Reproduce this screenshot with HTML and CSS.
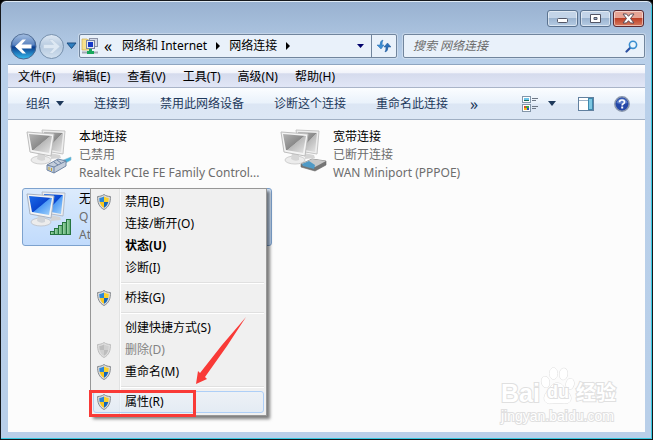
FILE: index.html
```html
<!DOCTYPE html>
<html lang="zh-CN">
<head>
    <meta charset="UTF-8">
    <meta name="viewport" content="width=device-width, initial-scale=1.0">
    <title>网络连接</title>
    <link rel="stylesheet" href="styles.css">
</head>
<body>
    <!-- Shared icons -->
    <svg class="defs" width="0" height="0" aria-hidden="true">
        <defs>
            <linearGradient id="grayScreen" x1="0" y1="0" x2="1" y2="1">
                <stop offset="0" stop-color="#b4b4b4"/>
                <stop offset=".5" stop-color="#8a8a8a"/>
                <stop offset=".52" stop-color="#b9b9b9"/>
                <stop offset="1" stop-color="#e6e6e6"/>
            </linearGradient>
            <linearGradient id="blueScreen" x1="0" y1="0" x2="1" y2="1">
                <stop offset="0" stop-color="#1c6be8"/>
                <stop offset=".5" stop-color="#0a46cf"/>
                <stop offset=".53" stop-color="#4f9bf5"/>
                <stop offset="1" stop-color="#a5d4fb"/>
            </linearGradient>
            <linearGradient id="backBlue" x1="0" y1="0" x2="0" y2="1">
                <stop offset="0" stop-color="#8fb0dc"/>
                <stop offset=".48" stop-color="#2f62ad"/>
                <stop offset=".52" stop-color="#0b3c8c"/>
                <stop offset="1" stop-color="#35bdf0"/>
            </linearGradient>
            <linearGradient id="forwardGray" x1="0" y1="0" x2="0" y2="1">
                <stop offset="0" stop-color="#dfe9f4"/>
                <stop offset=".5" stop-color="#b5c9df"/>
                <stop offset="1" stop-color="#d3e1ef"/>
            </linearGradient>
            <linearGradient id="barGreen" x1="0" y1="0" x2="1" y2="0">
                <stop offset="0" stop-color="#a9dcb4"/>
                <stop offset="1" stop-color="#4fa565"/>
            </linearGradient>
        </defs>
        <symbol id="shield" viewBox="0 0 14 16">
            <path d="M7 .5C5 2 3 2.400 .6 2.500C.4 8.500 2 13 7 15.500C12 13 13.600 8.500 13.400 2.500C11 2.400 9 2 7 .5Z" fill="#dcdcdc" stroke="#85898d"/>
            <path d="M7 2.500C5.500 3.400 4 3.800 2.300 4C2.300 5.600 2.400 6.800 2.700 8H7Z" fill="#2c86d6"/>
            <path d="M7 2.500C8.500 3.400 10 3.800 11.700 4C11.700 5.600 11.600 6.800 11.300 8H7Z" fill="#fbd22d"/>
            <path d="M7 8H2.700C3.400 10.600 4.700 12.500 7 13.800Z" fill="#fbc91c"/>
            <path d="M7 8H11.300C10.600 10.600 9.300 12.500 7 13.800Z" fill="#1767b8"/>
        </symbol>
        <symbol id="shieldOff" viewBox="0 0 14 16">
            <path d="M7 .5C5 2 3 2.400 .6 2.500C.4 8.500 2 13 7 15.500C12 13 13.600 8.500 13.400 2.500C11 2.400 9 2 7 .5Z" fill="#dedede" stroke="#bcbcbc"/>
            <path d="M7 2.500C5.500 3.400 4 3.800 2.300 4C2.300 5.600 2.400 6.800 2.700 8H7ZM7 8H11.300C10.600 10.600 9.300 12.500 7 13.800Z" fill="#bdbdbd"/>
            <path d="M7 2.500C8.500 3.400 10 3.800 11.700 4C11.700 5.600 11.600 6.800 11.300 8H7ZM7 8H2.700C3.400 10.600 4.700 12.500 7 13.800Z" fill="#cfcfcf"/>
        </symbol>
        <symbol id="pcGray" viewBox="0 0 48 48">
            <path d="M25 25l10 2l1 3l-10 1z" fill="#d4d4d4"/>
            <path d="M17 2L40 3L38 26L20 23Z" fill="#eee" stroke="#c4c4c4"/>
            <path d="M19 4L38 5L36 24L21 21Z" fill="url(#grayScreen)"/>
            <ellipse cx="16" cy="32" rx="10" ry="4" fill="#ececec" stroke="#cfcfcf"/>
            <path d="M13 25L20 26L20 32Q16 34 12 31Z" fill="#d6d6d6"/>
            <path d="M2 4L29 6L26 28L5 24Z" fill="#f4f4f4" stroke="#bdbdbd"/>
            <path d="M4 6L27 8L24 25L7 22Z" fill="url(#grayScreen)"/>
        </symbol>
        <symbol id="pcBlue" viewBox="0 0 48 48">
            <path d="M25 25l10 2l1 3l-10 1z" fill="#d4d4d4"/>
            <path d="M17 2L40 3L38 26L20 23Z" fill="#eee" stroke="#b3bccb"/>
            <path d="M19 4L38 5L36 24L21 21Z" fill="url(#blueScreen)"/>
            <ellipse cx="16" cy="32" rx="10" ry="4" fill="#ececec" stroke="#c3c8d0"/>
            <path d="M13 25L20 26L20 32Q16 34 12 31Z" fill="#cfd3d8"/>
            <path d="M2 4L29 6L26 28L5 24Z" fill="#f4f4f4" stroke="#a9b3c2"/>
            <path d="M4 6L27 8L24 25L7 22Z" fill="url(#blueScreen)"/>
        </symbol>
    </svg>

    <div class="window">
        <!-- Title bar -->
        <div class="titlebar">
            <button type="button" class="control" aria-label="最小化">
                <svg width="13" height="11" viewBox="0 0 13 11"><rect x="1.500" y="5.500" width="10" height="4" rx="1" fill="#fff" stroke="#535666"/></svg>
            </button>
            <button type="button" class="control" aria-label="最大化">
                <svg width="13" height="11" viewBox="0 0 13 11"><path d="M1.500 1.500H11.500V9.500H1.500ZM5 4.500V6.500H8V4.500Z" fill="#fff" fill-rule="evenodd" stroke="#535666"/></svg>
            </button>
            <button type="button" class="control close" aria-label="关闭">
                <svg width="13" height="11" viewBox="0 0 13 11"><path d="M1 1H4.500L6.500 3.300L8.500 1H12L8.500 5.500L12 10H8.500L6.500 7.700L4.500 10H1L4.500 5.500Z" fill="#fff" stroke="#5b4a55"/></svg>
            </button>
        </div>

        <!-- Navigation and address -->
        <div class="navbar">
            <div class="travel">
                <button type="button" aria-label="后退">
                    <svg width="27" height="27" viewBox="0 0 27 27"><circle cx="13.500" cy="13.500" r="12.500" fill="url(#backBlue)" stroke="#47658f"/><path d="M2.500 12A11 11 0 0 1 24.500 12Q13 16 2.500 12Z" fill="#fff" opacity=".18"/><path d="M5 13.500L12.500 6.500H16L11.500 11.500H21.500V15.500H11.500L16 20.500H12.500Z" fill="#fff"/></svg>
                </button>
                <button type="button" aria-label="前进">
                    <svg width="27" height="27" viewBox="0 0 27 27"><circle cx="13.500" cy="13.500" r="12" fill="url(#forwardGray)" stroke="#7690ad"/><path d="M22 13.500L14.500 6.500H11L15.500 11.500H5.500V15.500H15.500L11 20.500H14.500Z" fill="#dde8f3" stroke="#b9cbdd" stroke-width=".5"/></svg>
                </button>
                <button type="button" aria-label="最近页面">
                    <svg width="11" height="8" viewBox="0 0 11 8"><path d="M1 1H10L5.500 6.500Z" fill="#2f7fc0" stroke="#1c4d80"/></svg>
                </button>
            </div>
            <div class="address">
                <svg width="18" height="18" viewBox="0 0 18 18">
                    <path d="M1 2H6L7 3H10V13H1Z" fill="#f6e08c" stroke="#cfae50" stroke-width=".7"/>
                    <rect x="8.500" y="1.500" width="8" height="8" fill="#d4dae8" stroke="#8b93a8"/>
                    <rect x="5.500" y="3.500" width="8" height="8" fill="#e6e9f0" stroke="#7b86a0"/>
                    <rect x="7" y="5" width="5" height="5" fill="#1538c8"/>
                    <path d="M9 12V15M1 15.500H17" stroke="#a4aab5" stroke-width="2"/>
                    <path d="M8 12H11V14H13V17H6V14H8Z" fill="#18a75c"/>
                </svg>
                <span class="chevrons">«</span>
                <a href="#">网络和 Internet</a>
                <svg width="4" height="8" viewBox="0 0 4 8"><path d="M0 0L4 4L0 8Z"/></svg>
                <a href="#">网络连接</a>
                <svg width="4" height="8" viewBox="0 0 4 8"><path d="M0 0L4 4L0 8Z"/></svg>
                <button type="button" class="history" aria-label="以前的位置">
                    <svg width="7" height="4" viewBox="0 0 7 4"><path d="M0 0H7L3.500 4Z" fill="#00006b"/></svg>
                </button>
                <button type="button" class="refresh" aria-label="刷新">
                    <svg width="14" height="14" viewBox="0 0 14 14"><path d="M6 1Q3 1.500 3 6H0L4 10L7 6H5Q5 3 6 1Z" fill="#3d8ed5" stroke="#286eae" stroke-width=".5"/><path d="M8 13Q11 12.500 11 8H14L10.500 4L7 8H9Q9 11 8 13Z" fill="#2c6fb8" stroke="#1d5797" stroke-width=".5"/></svg>
                </button>
            </div>
            <div class="search">
                <input type="text" placeholder="搜索 网络连接" aria-label="搜索 网络连接">
                <svg width="13" height="13" viewBox="0 0 13 13"><path d="M5.500 7.500L1.500 11.500" stroke="#2b4fa0" stroke-width="2.200" stroke-linecap="round"/><circle cx="8" cy="4.800" r="3.600" fill="#eaf5fd" stroke="#3a8ed0" stroke-width="1.600"/></svg>
            </div>
        </div>

        <div class="client">
            <!-- Menu bar -->
            <nav class="menubar">
                <a href="#">文件(F)</a>
                <a href="#">编辑(E)</a>
                <a href="#">查看(V)</a>
                <a href="#">工具(T)</a>
                <a href="#">高级(N)</a>
                <a href="#">帮助(H)</a>
            </nav>

            <!-- Command bar -->
            <div class="toolbar">
                <button type="button">组织 <svg width="8" height="5" viewBox="0 0 8 5"><path d="M0 0H8L4 5Z" fill="#1e395b"/></svg></button>
                <button type="button">连接到</button>
                <button type="button">禁用此网络设备</button>
                <button type="button">诊断这个连接</button>
                <button type="button">重命名此连接</button>
                <button type="button" class="more">»</button>
                <div class="views">
                    <button type="button" aria-label="更改视图">
                        <svg width="16" height="16" viewBox="0 0 16 16"><rect x=".5" y=".5" width="8" height="6" fill="#fff" stroke="#8395a8"/><path d="M2 2H7V4H2Z" fill="#6cc4e8"/><path d="M2 4H7V5H2Z" fill="#176a55"/><rect x=".5" y="8.500" width="8" height="7" fill="#fff" stroke="#8395a8"/><path d="M2 10H4V12H2Z" fill="#e0482c"/><path d="M4 10H7V12H4Z" fill="#3aa447"/><path d="M2 12H5V14H2Z" fill="#f0b91c"/><path d="M5 12H7V14H5Z" fill="#2a4cc0"/><path d="M10 2.500H16M10 4.500H14M10 10.500H16M10 12.500H14" stroke="#6d7785"/></svg>
                    </button>
                    <button type="button" aria-label="更多选项">
                        <svg width="8" height="5" viewBox="0 0 8 5"><path d="M0 0H8L4 5Z" fill="#1e395b"/></svg>
                    </button>
                </div>
                <div class="extras">
                    <button type="button" aria-label="预览窗格">
                        <svg width="16" height="14" viewBox="0 0 16 14"><rect x=".5" y=".5" width="15" height="13" fill="#fff" stroke="#61809f"/><path d="M1 3.500H10" stroke="#9db2c7"/><rect x="10.500" y="1.500" width="4" height="11" fill="#7cc7e2" stroke="#3f88ad"/></svg>
                    </button>
                    <button type="button" aria-label="帮助">
                        <svg width="16" height="16" viewBox="0 0 16 16"><circle cx="8" cy="8" r="7.200" fill="#2447a8" stroke="#8b98ad" stroke-width="1.500"/><path d="M2.500 7A5.600 5.600 0 0 1 13.500 7Q8 9 2.500 7Z" fill="#7fa0e0" opacity=".6"/><path d="M5.500 6.300Q5.500 4 8 4T10.500 6.100Q10.500 7.400 9 8.100Q8.200 8.500 8.200 9.500" fill="none" stroke="#fff" stroke-width="1.700"/><rect x="7.200" y="10.500" width="2" height="2" fill="#fff"/></svg>
                    </button>
                </div>
            </div>

            <!-- Connections -->
            <main class="connections">
                <div class="item">
                    <svg width="48" height="48" viewBox="0 0 48 48">
                        <use href="#pcGray"/>
                        <path d="M36 33L46 29V32L37 37Z" fill="#45b5de" stroke="#8fb9cc" stroke-width=".6"/>
                        <path d="M22 37L33 31L41 33L41 38L29 45L22 42Z" fill="#c3cddb" stroke="#7186a4"/>
                        <path d="M22 37L29 39L41 33M29 39V45M32 32L36 35M29 34L33 37" fill="none" stroke="#6c82a3"/>
                        <path d="M24 39V42M26.500 40V43" stroke="#c5a53a"/>
                    </svg>
                    <div class="info">
                        <div class="name">本地连接</div>
                        <div>已禁用</div>
                        <div>Realtek PCIe FE Family Control...</div>
                    </div>
                </div>
                <div class="item">
                    <svg width="48" height="48" viewBox="0 0 48 48">
                        <use href="#pcGray"/>
                        <path d="M22 36L33 31L47 33V37L36 43L22 39Z" fill="#757575" stroke="#666" stroke-width=".6"/>
                        <path d="M22 36L33 31L47 33L36 39Z" fill="#c8c8c8"/>
                        <path d="M23 36L30 33L36 37L35 41L24 38Z" fill="#4f9ac6"/>
                    </svg>
                    <div class="info">
                        <div class="name">宽带连接</div>
                        <div>已断开连接</div>
                        <div>WAN Miniport (PPPOE)</div>
                    </div>
                </div>
                <div class="item selected">
                    <svg width="48" height="48" viewBox="0 0 48 48">
                        <use href="#pcBlue"/>
                        <g fill="url(#barGreen)" stroke="#267540">
                            <rect x="25.500" y="41.500" width="4" height="3"/>
                            <rect x="29.500" y="38.500" width="4" height="6"/>
                            <rect x="33.500" y="35.500" width="4" height="9"/>
                            <rect x="37.500" y="32.500" width="4" height="12"/>
                            <rect x="41.500" y="29.500" width="4" height="15"/>
                        </g>
                    </svg>
                    <div class="info">
                        <div class="name">无</div>
                        <div>Q</div>
                        <div>At</div>
                    </div>

                    <!-- Context menu -->
                    <div class="context">
                        <button type="button"><svg width="14" height="16"><use href="#shield"/></svg><span>禁用(B)</span></button>
                        <button type="button"><span>连接/断开(O)</span></button>
                        <button type="button" class="default"><span>状态(U)</span></button>
                        <button type="button"><span>诊断(I)</span></button>
                        <hr>
                        <button type="button"><svg width="14" height="16"><use href="#shield"/></svg><span>桥接(G)</span></button>
                        <hr>
                        <button type="button"><span>创建快捷方式(S)</span></button>
                        <button type="button" disabled><svg width="14" height="16"><use href="#shieldOff"/></svg><span>删除(D)</span></button>
                        <button type="button"><svg width="14" height="16"><use href="#shield"/></svg><span>重命名(M)</span></button>
                        <hr>
                        <button type="button" class="active"><svg width="14" height="16"><use href="#shield"/></svg><span>属性(R)</span></button>
                        <div class="marker"></div>
                        <svg class="arrow" width="52" height="70" viewBox="0 0 52 70"><path d="M51 1L32 30L10 61L12 63L1 68L3 55L5 57L27 29Z" fill="#f93a37"/></svg>
                    </div>
                </div>

                <!-- Watermark -->
                <div class="watermark">
                    <div class="brand">
                        <span>Bai</span>
                        <span class="paw">
                            <svg width="36" height="38" viewBox="0 0 36 38" fill="#fff" stroke="#dedede">
                                <ellipse cx="5.500" cy="15" rx="4" ry="5.500" transform="rotate(-12 5.500 15)"/>
                                <ellipse cx="13.500" cy="6.500" rx="4" ry="5.700"/>
                                <ellipse cx="23.500" cy="7" rx="4" ry="5.700" transform="rotate(8 23.500 7)"/>
                                <ellipse cx="30" cy="17" rx="4" ry="5.500" transform="rotate(12 30 17)"/>
                                <path d="M17 16C23 16 24 21 28 25C34 32 30 37 24 36.500Q18 35.500 12 36.500C5 37.500 2 32 6 26C10 21 12 16 17 16Z"/>
                            </svg>
                            <span class="du">du</span>
                        </span>
                        <span class="cn">经验</span>
                    </div>
                    <div class="url">jingyan.baidu.com</div>
                </div>
            </main>
        </div>
    </div>
</body>
</html>
```
FILE: styles.css
```css
/* Page */
* {
    box-sizing: border-box;
}
body {
    margin: 0;
    background: #000;
    font-family: "Noto Sans", "Noto Sans CJK SC", sans-serif;
    font-size: 12px;
    line-height: 18px;
    color: #000;
}
button {
    margin: 0;
    padding: 0;
    border: none;
    background: none;
    font: inherit;
    color: inherit;
    cursor: pointer;
}
a {
    color: inherit;
    text-decoration: none;
}
svg {
    display: block;
    flex: none;
}
.defs {
    position: absolute;
}

/* Window frame */
.window {
    display: flex;
    flex-direction: column;
    min-height: 100vh;
    padding: 0 7px 7px;
    border: 1px solid #15181c;
    border-radius: 6px 6px 0 0;
    background: linear-gradient(#98b1d0, #b9d0ea 60px, #b9cfe9);
    box-shadow: inset 0 1px #dfeaf5, inset -1px -1px #35c8e0;
}
.titlebar {
    display: flex;
    justify-content: flex-end;
    gap: 2px;
    height: 33px;
    padding: 9px 1px 0 0;
}
.control {
    display: flex;
    align-items: center;
    justify-content: center;
    width: 31px;
    height: 17px;
    border: 1px solid #5b7390;
    border-radius: 3px;
    background: linear-gradient(#c3d4e8 45%, #9bb4d0 50%, #b6cce4);
    box-shadow: inset 0 0 0 1px rgba(255, 255, 255, 0.5);
}
.close {
    border-color: #5c2a32;
    background: linear-gradient(#e6a394 45%, #bd3f26 50%, #d77b60);
}

/* Navigation bar */
.navbar {
    display: flex;
    align-items: center;
    gap: 6px;
    height: 24px;
    margin-bottom: 6px;
}
.travel {
    display: flex;
    align-items: center;
    gap: 1px;
    margin: 0 -4px 0 2px;
}
.address, .search {
    display: flex;
    align-items: center;
    height: 24px;
    border: 1px solid #71859d;
    border-radius: 2px;
    background: #e9f1fa;
    box-shadow: 0 0 0 1px rgba(255, 255, 255, 0.3);
}
.address {
    flex: 1;
    gap: 9px;
    padding-left: 1px;
}
.chevrons {
    width: 10px;
    margin: 0 -1px 0 -4px;
    font-size: 16px;
    line-height: 16px;
}
.history {
    display: flex;
    justify-content: center;
    width: 20px;
    margin-left: auto;
}
.refresh {
    display: flex;
    align-items: center;
    justify-content: center;
    width: 25px;
    height: 22px;
    margin-left: -9px;
    border-left: 1px solid #71859d;
}
.search {
    width: 38%;
    padding: 0 6px 0 9px;
}
.search input {
    flex: 1;
    min-width: 0;
    padding: 0;
    border: none;
    outline: none;
    background: none;
    font: inherit;
    font-style: italic;
}
.search input::placeholder {
    color: #6d6d6d;
    opacity: 1;
}

/* Client area */
.client {
    display: flex;
    flex: 1;
    flex-direction: column;
    border-top: 1px solid #8ea5c0;
    background: #fcfcfc;
}
.menubar {
    display: flex;
    gap: 17px;
    height: 23px;
    padding: 3px 10px 1px;
    border-bottom: 1px solid #a9b4c8;
    background: linear-gradient(#fff, #f1f3fa 35%, #d5dbed 40%, #e1e6f6);
}
.toolbar {
    display: flex;
    align-items: center;
    gap: 30px;
    height: 32px;
    padding: 0 15px 0 18px;
    border-bottom: 1px solid #a0afc3;
    background: linear-gradient(#fbfdff, #eaf2fb 48%, #dce6f4 52%, #dce7f5);
    color: #1e395b;
    white-space: nowrap;
}
.toolbar button {
    display: flex;
    align-items: center;
    gap: 6px;
}
.toolbar .more {
    margin-left: -8px;
    font-size: 16px;
}
.views, .extras {
    display: flex;
    align-items: center;
}
.views {
    gap: 10px;
    margin: 0 -8px 0 auto;
}
.extras {
    gap: 20px;
}

/* Connections list */
.connections {
    position: relative;
    display: grid;
    grid-template-columns: repeat(auto-fill, 250px);
    align-content: start;
    gap: 4px;
    flex: 1;
    padding: 6px 14px;
}
.item {
    position: relative;
    display: flex;
    gap: 6px;
    height: 58px;
    padding: 1px 2px;
    border: 1px solid transparent;
    border-radius: 3px;
    color: #6d6d6d;
    white-space: nowrap;
}
.name {
    color: #000;
}
.selected {
    border-color: #7da2ce;
    background: linear-gradient(#dcebfc, #c1dbfc);
}

/* Context menu */
.context {
    position: absolute;
    top: -1px;
    left: 67px;
    width: 177px;
    padding: 2px;
    border: 1px solid #979797;
    background: linear-gradient(90deg, #f0f0f0 28px, #e2e3e3 28px, #e2e3e3 29px, #fff 29px, #fff 30px, #f0f0f0 30px);
    box-shadow: 3px 3px 3px rgba(0, 0, 0, 0.5);
    color: #000;
}
.context button {
    display: flex;
    align-items: center;
    width: 100%;
    height: 22px;
    padding-left: 3px;
    border: 1px solid transparent;
    border-radius: 3px;
}
.context button span {
    margin-left: 28px;
}
.context button svg + span {
    margin-left: 14px;
}
.context .default {
    font-weight: bold;
}
.context button:disabled {
    color: #838383;
}
.context .active {
    border-color: #aecff7;
    background: linear-gradient(rgba(235, 242, 250, 0.6), rgba(220, 232, 246, 0.6));
}
.context hr {
    height: 2px;
    margin: 3px 0 3px 28px;
    border: none;
    border-top: 1px solid #e0e0e0;
    background: #fff;
}

/* Highlight of the properties entry */
.marker {
    position: absolute;
    bottom: -2px;
    left: -2px;
    width: 107px;
    height: 27px;
    border: 3px solid #f93a37;
}
.arrow {
    position: absolute;
    bottom: 29px;
    left: 104px;
}

/* Watermark */
.watermark {
    position: absolute;
    right: 28px;
    bottom: 5px;
    width: 116px;
    color: #fff;
    -webkit-text-stroke: 2px #e0e0e0;
    paint-order: stroke fill;
}
.brand {
    display: flex;
    align-items: flex-end;
    font-family: "Liberation Sans", "Noto Sans CJK SC", sans-serif;
    font-size: 25px;
    font-weight: bold;
    line-height: 24px;
}
.paw {
    position: relative;
}
.du {
    position: absolute;
    right: 0;
    bottom: 1px;
    left: 0;
    font-size: 18px;
    text-align: center;
}
.cn {
    font-size: 20px;
}
.url {
    font-family: "Liberation Sans", sans-serif;
    font-size: 14px;
    line-height: 22px;
}
```
